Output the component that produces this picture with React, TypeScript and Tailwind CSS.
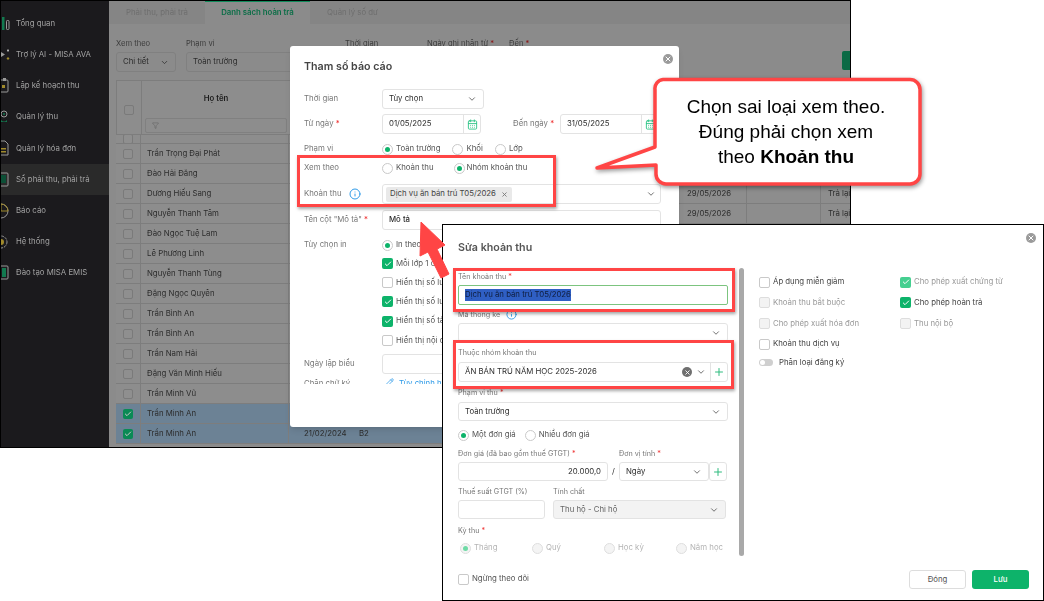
import React from "react";
import { Check, ChevronDown, Plus, CalendarDays, X, Filter, Info, Pencil } from "lucide-react";

const G = "#12794f";
const Y = "#a08a2c";
const W = "#9a9a9a";

const icons: React.ReactNode[] = [
  <><rect x="1" y="1" width="2.5" height="13" fill={G} /><rect x="5.5" y="4.5" width="2.5" height="9" rx="0.8" stroke={W} /></>,
  <><path d="M0 5l4 2.500-4 2.500z" fill={W} /><path d="M7 2l1 1.500-1 1.500-1-1.500z" fill="#c9c9c9" /><path d="M7 10l1.500 1.500L7 13l-1.500-1.500z" fill={Y} /></>,
  <><rect x="-2" y="2" width="9" height="12" rx="1" stroke={W} /><path d="M2 0h3v3H2z" fill={W} /><rect x="1" y="7" width="3" height="3" fill={Y} /></>,
  <><circle cx="3" cy="5" r="3" stroke={W} /><path d="M0 11c2 2 4 2 6 0v2H0z" fill={G} /><circle cx="3" cy="5" r="1" fill={G} /></>,
  <><path d="M-2 1h6l3 3v11H-2z" stroke={W} /><rect x="0" y="8" width="5" height="1.500" fill={Y} /><rect x="0" y="11" width="5" height="1.500" fill={Y} /></>,
  <><rect x="-2" y="1" width="9" height="13" rx="1" stroke={W} /><rect x="0" y="3" width="5" height="8" fill="#0c4f36" /></>,
  <><circle cx="0" cy="8" r="7" stroke={W} /><path d="M0 1a7 7 0 0 1 7 7H0z" stroke={Y} /></>,
  <><circle cx="0" cy="8" r="6" stroke={W} strokeDasharray="2.500 1" /><circle cx="0" cy="8" r="3" fill={Y} /></>,
  <><rect x="-2" y="1" width="9" height="13" rx="1" stroke={W} /><rect x="1" y="3" width="4" height="9" fill={G} /></>,
];

const menu = ["Tổng quan", "Trợ lý AI - MISA AVA", "Lập kế hoạch thu", "Quản lý thu", "Quản lý hóa đơn", "Sổ phải thu, phải trả", "Báo cáo", "Hệ thống", "Đào tạo MISA EMIS"];

const names = ["Trần Trọng Đại Phát","Đào Hải Đăng","Dương Hiếu Sang","Nguyễn Thanh Tâm","Đào Ngọc Tuệ Lam","Lê Phương Linh","Nguyễn Thanh Tùng","Đặng Ngọc Quyên","Trần Bình An","Trần Bình An","Trần Nam Hải","Đặng Văn Minh Hiếu","Trần Minh Vũ","Trần Minh An","Trần Minh An"];

function Req() {
  return <span className="text-[#ee2b2b]">&nbsp;*</span>;
}

function Radio({ on, dim }: { on?: boolean; dim?: boolean }) {
  return (
    <span className={`flex h-[11px] w-[11px] shrink-0 items-center justify-center rounded-full border ${dim ? "border-[#dedede] bg-[#f4f4f4]" : "border-[#c9c9c9] bg-white"}`}>
      {on && <span className={`h-[5px] w-[5px] rounded-full ${dim ? "bg-[#6fdaa6]" : "bg-[#0db36a]"}`} />}
    </span>
  );
}

function Box({ on, dim, soft }: { on?: boolean; dim?: boolean; soft?: boolean }) {
  if (on)
    return (
      <span className={`flex h-[11px] w-[11px] shrink-0 items-center justify-center rounded-[2px] ${soft ? "bg-[#45cf90]" : "bg-[#0db36a]"}`}>
        <Check size={8} strokeWidth={3} className="text-white" />
      </span>
    );
  return <span className={`h-[11px] w-[11px] shrink-0 rounded-[2px] border ${dim ? "border-[#dddddd] bg-[#f3f3f3]" : "border-[#c9c9c9] bg-white"}`} />;
}

function Close({ cls }: { cls: string }) {
  return (
    <span className={`absolute flex h-[10px] w-[10px] items-center justify-center rounded-full bg-[#9a9a9a] ${cls}`}>
      <X size={8} strokeWidth={3} className="text-white" />
    </span>
  );
}

function Sidebar() {
  return (
    <div className="flex h-full w-[108px] shrink-0 flex-col overflow-hidden bg-[#1b1a1d] pt-[7px]">
      {menu.map((label, i) => (
        <div key={label} className={`flex h-[31.2px] shrink-0 items-center gap-[6px] text-[7.8px] text-[#a2a2a2] ${i === 5 ? "bg-[#2a2a2a]" : ""}`}>
          <svg width="9" height="16" viewBox="0 0 9 16" fill="none" className="shrink-0">{icons[i]}</svg>
          <span className="whitespace-nowrap">{label}</span>
        </div>
      ))}
    </div>
  );
}

function Row({ name, selected, date, b2, right, partial }: { name: string; selected?: boolean; date?: string; b2?: string; right?: boolean; partial?: boolean }) {
  return (
    <div className={`flex shrink-0 items-center border-b border-[#7d7d7d] text-[7.8px] text-[#2c2c2c] ${partial ? "h-[9px] overflow-hidden" : "h-[20px]"} ${selected ? "bg-[#6c8295]" : "bg-[#8d8d8d]"}`}>
      <div className="flex h-full w-[25px] shrink-0 items-center justify-center border-r border-[#7d7d7d]">
        {selected ? (
          <span className="flex h-[10px] w-[10px] items-center justify-center rounded-[2px] bg-[#0a8a55]"><Check size={8} strokeWidth={3} className="text-[#c9c9c9]" /></span>
        ) : (
          <span className="h-[10px] w-[10px] rounded-[2px] border border-[#7a7a7a] bg-[#8f8f8f]" />
        )}
      </div>
      <div className="flex h-full w-[148px] shrink-0 items-center whitespace-nowrap border-r border-[#7d7d7d] pl-[6px]">{name}</div>
      <div className="w-[70px] shrink-0 pl-[15px]">{date}</div>
      <div className="w-[320px] shrink-0">{b2}</div>
      <div className="flex h-full w-[68px] shrink-0 items-center border-r border-[#7d7d7d] pl-[8px]">{right ? "29/05/2026" : ""}</div>
      <div className="h-full w-[74px] shrink-0 border-r border-[#7d7d7d]" />
      <div className="whitespace-nowrap pl-[7px]">{right ? "Trả lại" : ""}</div>
    </div>
  );
}

function Main() {
  return (
    <div className="flex h-full w-[741px] flex-col overflow-hidden bg-[#8b8b8b]">
      <div className="flex h-[23px] shrink-0 items-center bg-[#858585] text-[7.8px]">
        <div className="flex h-full w-[96px] items-center justify-center text-[#6e6e6e]">Phải thu, phải trả</div>
        <div className="flex h-full w-[105px] items-center justify-center border-t border-[#0f8a5a] bg-[#8b8b8b] font-semibold text-[#0b6e47]">Danh sách hoàn trả</div>
        <div className="flex h-full w-[85px] items-center justify-center text-[#6e6e6e]">Quản lý số dư</div>
      </div>
      <div className="flex h-[28px] shrink-0 gap-[9px] pl-[7px] pt-[14px] text-[7.6px] leading-[11px] text-[#3c3c3c]">
        <span className="w-[61px]">Xem theo</span>
        <span className="w-[150px]">Phạm vi</span>
        <span className="w-[73px]">Thời gian</span>
        <span className="w-[73px] whitespace-nowrap">Ngày ghi nhận từ <span className="text-[#8a1010]">*</span></span>
        <span className="whitespace-nowrap">Đến <span className="text-[#8a1010]">*</span></span>
      </div>
      <div className="flex h-[28px] shrink-0 gap-[10px] pl-[7px] text-[7.8px] text-[#2c2c2c]">
        <div className="flex h-[20px] w-[60px] items-center justify-between rounded-[3px] border border-[#808080] px-[6px]">Chi tiết<ChevronDown size={9} /></div>
        <div className="flex h-[20px] w-[150px] items-center rounded-[3px] border border-[#808080] px-[6px]">Toàn trường</div>
        <div className="ml-auto -mt-[1px] h-[19px] w-[8px] rounded-l-[2px] bg-[#0a6a45]" />
      </div>
      <div className="ml-[7px] flex min-h-0 flex-1 flex-col">
        <div className="flex h-[55px] shrink-0 border-y border-l border-[#7d7d7d] bg-[#8d8d8d] text-[7.8px]">
          <div className="flex w-[25px] shrink-0 items-center justify-center border-r border-[#7d7d7d] pt-[5px]"><span className="h-[10px] w-[10px] rounded-[2px] border border-[#7a7a7a]" /></div>
          <div className="flex w-[148px] flex-col items-center pt-[11px]">
            <span className="leading-[12px] font-semibold text-[#1c1c1c]">Họ tên</span>
            <div className="mt-[14px] flex h-[15px] w-[142px] items-center rounded-[2px] border border-[#808080] pl-[6px]"><Filter size={7} className="text-[#666666]" /></div>
          </div>
        </div>
        <Row name="" partial />
        {names.map((n, i) => (
          <Row key={i} name={n} selected={i > 12} right={i === 2 || i === 3} date={i === 14 ? "21/02/2024" : ""} b2={i === 14 ? "B2" : ""} />
        ))}
      </div>
    </div>
  );
}

function ReportRow({ label, h, children, cls = "" }: { label: React.ReactNode; h: string; children?: React.ReactNode; cls?: string }) {
  return (
    <div className={`flex shrink-0 items-center ${h} ${cls}`}>
      <div className="w-[78px] shrink-0 whitespace-nowrap text-[#777777]">{label}</div>
      {children}
    </div>
  );
}

const inputCls = "flex items-center rounded-[3px] border border-[#e3e3e3] bg-white";

function ReportModal() {
  const checks: [boolean, string][] = [[true, "Mỗi lớp 1 danh sách"], [false, "Hiển thị số lượng"], [true, "Hiển thị số lượng"], [true, "Hiển thị số tài khoản"], [false, "Hiển thị nội dung"]];
  return (
    <div className="absolute left-[290px] top-[46px] flex h-[381px] w-[389px] flex-col rounded-[3px] bg-white pl-[14px] text-[7.8px] text-[#2c2c2c] shadow-md blur-[0.35px]">
      <Close cls="right-[6px] top-[8px]" />
      <div className="flex h-[43px] shrink-0 items-center text-[10.7px] font-semibold text-[#444444]">Tham số báo cáo</div>
      <ReportRow label="Thời gian" h="h-[20px]">
        <div className={`${inputCls} h-[20px] w-[102px] justify-between px-[6px]`}>Tùy chọn<ChevronDown size={10} className="text-[#555555]" /></div>
      </ReportRow>
      <ReportRow label={<>Từ ngày<Req /></>} h="h-[20px]" cls="mt-[5px]">
        <div className={`${inputCls} h-[20px] w-[99px] justify-between pl-[6px]`}>01/05/2025<span className="flex h-full w-[17px] items-center justify-center border-l border-[#e3e3e3]"><CalendarDays size={11} className="text-[#2fc487]" /></span></div>
        <div className="ml-[32px] w-[47px] whitespace-nowrap text-[#777777]">Đến ngày<Req /></div>
        <div className={`${inputCls} h-[20px] w-[99px] justify-between pl-[6px]`}>31/05/2025<span className="flex h-full w-[17px] items-center justify-center border-l border-[#e3e3e3]"><CalendarDays size={11} className="text-[#2fc487]" /></span></div>
      </ReportRow>
      <ReportRow label="Phạm vi" h="h-[20px]" cls="mt-[5px]">
        <Radio on /><span className="ml-[3px] text-[#555555]">Toàn trường</span>
        <span className="ml-[12px]"><Radio /></span><span className="ml-[3px] text-[#555555]">Khối</span>
        <span className="ml-[12px]"><Radio /></span><span className="ml-[3px] text-[#555555]">Lớp</span>
      </ReportRow>
      <ReportRow label="Xem theo" h="h-[18px]">
        <Radio /><span className="ml-[3px] text-[#555555]">Khoản thu</span>
        <span className="ml-[20px]"><Radio on /></span><span className="ml-[2px] text-[#555555]">Nhóm khoản thu</span>
      </ReportRow>
      <ReportRow label={<span className="flex items-center">Khoản thu<Info size={12} className="ml-[7px] text-[#2f9be8]" /></span>} h="h-[20px]" cls="mt-[7px]">
        <div className={`${inputCls} h-[20px] w-[279px] justify-between pl-[3px] pr-[4px]`}>
          <span className="flex h-[15px] items-center gap-[5px] rounded-[2px] bg-[#e9e9e9] px-[4px] text-[#444444]">Dịch vụ ăn bán trú T05/2026<X size={7} strokeWidth={3} className="text-[#777777]" /></span>
          <ChevronDown size={10} className="text-[#555555]" />
        </div>
      </ReportRow>
      <ReportRow label={<>Tên cột "Mô tả"<Req /></>} h="h-[20px]" cls="mt-[6px]">
        <div className={`${inputCls} h-[20px] w-[279px] pl-[6px] font-medium`}>Mô tả</div>
      </ReportRow>
      <ReportRow label="Tùy chọn in" h="h-[20px]" cls="mt-[5px]">
        <Radio on /><span className="ml-[3px] whitespace-nowrap text-[#555555]">In theo ngày sinh</span>
      </ReportRow>
      {checks.map(([on, t], i) => (
        <div key={i} className={`ml-[78px] flex h-[19.2px] shrink-0 items-center gap-[3px] whitespace-nowrap text-[#555555] ${i === 0 ? "-mt-[1px]" : ""}`}><Box on={on} />{t}</div>
      ))}
      <ReportRow label="Ngày lập biểu" h="h-[20px]" cls="mt-[4px]">
        <div className={`${inputCls} h-[20px] w-[279px]`} />
      </ReportRow>
      <div className="flex h-[10px] shrink-0 overflow-hidden pt-[4px] leading-[10px]">
        <span className="w-[78px] text-[#777777]">Chân chữ ký</span>
        <Pencil size={9} className="ml-[3px] text-[#2f9be8]" /><span className="ml-[5px] text-[#2f9be8]">Tùy chỉnh hiển thị</span>
      </div>
    </div>
  );
}

function Lab({ children, cls = "" }: { children: React.ReactNode; cls?: string }) {
  return <div className={`flex h-[11px] shrink-0 items-center whitespace-nowrap text-[7.2px] leading-none text-[#777777] ${cls}`}>{children}</div>;
}

function Sel({ children, cls = "" }: { children?: React.ReactNode; cls?: string }) {
  return <div className={`${inputCls} h-[19px] shrink-0 justify-between px-[6px] text-[7.8px] text-[#2c2c2c] ${cls}`}>{children}<ChevronDown size={10} className="ml-auto text-[#555555]" /></div>;
}

function EditModal() {
  const left: [string, boolean][] = [["Áp dụng miễn giảm", false], ["Khoản thu bắt buộc", true], ["Cho phép xuất hóa đơn", true], ["Khoản thu dịch vụ", false]];
  return (
    <div className="absolute left-[442px] top-[224px] h-[377px] w-[602px] border border-black bg-white">
      <div className="flex h-full w-full text-[7.8px] text-[#2c2c2c] blur-[0.35px]">
        <Close cls="right-[7px] top-[8px]" />
        <div className="flex w-[285px] shrink-0 flex-col pl-[15px]">
          <div className="flex h-[46px] shrink-0 items-center text-[10.7px] font-semibold text-[#555555]">Sửa khoản thu</div>
          <Lab>Tên khoản thu<Req /></Lab>
          <div className="mt-[3px] flex h-[20px] w-[270px] shrink-0 items-center rounded-[2px] border border-[#7cc47f] pl-[6px]">
            <span className="bg-[#2f5fc4] text-[#0f1d3d]">Dịch vụ ăn bán trú T05/2026</span>
          </div>
          <Lab cls="mt-[4px]">Mã thống kê<Info size={11} className="ml-[6px] text-[#2f9be8]" /></Lab>
          <Sel cls="mt-[3px] w-[270px]" />
          <Lab cls="mt-[5px]">Thuộc nhóm khoản thu</Lab>
          <div className={`${inputCls} mt-[4px] h-[20px] w-[270px] shrink-0 justify-between pl-[6px]`}>
            <span>ĂN BÁN TRÚ NĂM HỌC 2025-2026</span>
            <span className="flex h-full items-center">
              <span className="mr-[4px] flex h-[10px] w-[10px] items-center justify-center rounded-full bg-[#6f6f6f]"><X size={7} strokeWidth={3} className="text-white" /></span>
              <ChevronDown size={10} className="mr-[4px] text-[#555555]" />
              <span className="flex h-full w-[17px] items-center justify-center border-l border-[#e3e3e3]"><Plus size={12} strokeWidth={2} className="text-[#2fbb7f]" /></span>
            </span>
          </div>
          <Lab cls="mt-[5px]">Phạm vi thu<Req /></Lab>
          <Sel cls="mt-[4px] w-[270px]">Toàn trường</Sel>
          <div className="mt-[7px] flex h-[14px] shrink-0 items-center text-[#555555]">
            <Radio on /><span className="ml-[3px]">Một đơn giá</span>
            <span className="ml-[9px]"><Radio /></span><span className="ml-[3px]">Nhiều đơn giá</span>
          </div>
          <div className="mt-[6px] flex shrink-0">
            <Lab cls="w-[161px]">Đơn giá (đã bao gồm thuế GTGT)<Req /></Lab>
            <Lab>Đơn vị tính<Req /></Lab>
          </div>
          <div className="mt-[3px] flex h-[19px] shrink-0 items-center">
            <div className={`${inputCls} h-[19px] w-[150px] justify-end pr-[6px]`}>20.000,0</div>
            <span className="w-[11px] text-center">/</span>
            <Sel cls="w-[90px]">Ngày</Sel>
            <span className={`${inputCls} h-[19px] w-[18px] justify-center`}><Plus size={12} strokeWidth={2} className="text-[#2fbb7f]" /></span>
          </div>
          <div className="mt-[5px] flex shrink-0">
            <Lab cls="w-[95px]">Thuế suất GTGT (%)</Lab>
            <Lab>Tính chất</Lab>
          </div>
          <div className="mt-[3px] flex h-[19px] shrink-0 items-center gap-[8px]">
            <div className={`${inputCls} h-[19px] w-[87px]`} />
            <Sel cls="w-[173px] !bg-[#f3f3f3] !text-[#666666]">Thu hộ - Chi hộ</Sel>
          </div>
          <Lab cls="mt-[6px]">Kỳ thu<Req /></Lab>
          <div className="ml-[2px] mt-[6px] flex h-[12px] shrink-0 items-center text-[#b4b4b4]">
            {["Tháng", "Quý", "Học kỳ", "Năm học"].map((t, i) => (
              <span key={t} className="flex w-[72px] shrink-0 items-center gap-[3px]"><Radio on={i === 0} dim />{t}</span>
            ))}
          </div>
          <div className="mt-[19px] flex h-[12px] shrink-0 items-center gap-[3px] text-[#555555]"><Box />Ngừng theo dõi</div>
        </div>
        <div className="mt-[43px] ml-[11px] h-[288px] w-[5px] shrink-0 rounded-full bg-[#a9a9a9]" />
        <div className="flex w-[156px] shrink-0 flex-col pl-[15px] pt-[47px]">
          {left.map(([t, dim]) => (
            <div key={t} className={`flex h-[20.6px] items-center gap-[3px] whitespace-nowrap ${dim ? "text-[#999999]" : "text-[#444444]"}`}>
              <Box dim={dim} />{t}
            </div>
          ))}
          <div className="flex h-[17px] items-center gap-[6px] whitespace-nowrap text-[#444444]">
            <span className="flex h-[7px] w-[14px] items-center rounded-full bg-[#cfcfcf] pl-[1px]"><span className="h-[5px] w-[5px] rounded-full bg-white" /></span>
            Phân loại đăng ký
          </div>
        </div>
        <div className="flex flex-col pt-[47px]">
          <div className="flex h-[20.6px] items-center gap-[3px] whitespace-nowrap text-[#999999]"><Box on soft />Cho phép xuất chứng từ</div>
          <div className="flex h-[20.6px] items-center gap-[3px] whitespace-nowrap text-[#444444]"><Box on />Cho phép hoàn trả</div>
          <div className="flex h-[20.6px] items-center gap-[3px] whitespace-nowrap text-[#999999]"><Box dim />Thu nội bộ</div>
        </div>
        <div className="absolute bottom-[11px] right-[14px] flex gap-[6px]">
          <button className="h-[19px] w-[57px] rounded-[3px] border border-[#dddddd] bg-white text-[7.8px] text-[#555555]">Đóng</button>
          <button className="h-[19px] w-[57px] rounded-[3px] bg-[#0db36a] text-[7.8px] font-medium text-white">Lưu</button>
        </div>
      </div>
    </div>
  );
}

function RedBox({ cls }: { cls: string }) {
  return <div className={`pointer-events-none absolute border-[3px] border-[#ff4545] shadow-[1px_2px_3px_rgba(0,0,0,0.35)] ${cls}`} />;
}

export default function App() {
  return (
    <div className="relative h-[601px] w-[1044px] overflow-hidden bg-white" style={{ fontFamily: "Inter, 'Noto Sans', sans-serif" }}>
      <div className="absolute left-0 top-0 h-[448px] w-[851px] border border-black">
        <div className="flex h-full w-full overflow-hidden blur-[0.35px]">
          <Sidebar />
          <Main />
        </div>
      </div>
      <ReportModal />
      <EditModal />
      <RedBox cls="left-[297px] top-[155px] h-[52px] w-[259px]" />
      <RedBox cls="left-[453px] top-[268px] h-[44px] w-[282px]" />
      <RedBox cls="left-[453px] top-[340px] h-[49px] w-[281px]" />
      <svg className="absolute left-0 top-0" width="1044" height="601" fill="none">
        <path d="M663 79.5H910a10 10 0 0 1 10 10V174a10 10 0 0 1-10 10H666a10 10 0 0 1-10-10V165L597 168 655 147V89.5a9 9 0 0 1 8-10Z" fill="#fff" stroke="#ff4545" strokeWidth="3.5" strokeLinejoin="round" style={{ filter: "drop-shadow(1px 2px 2px rgba(0,0,0,0.4))" }} />
        <path d="M449 274 437 249 445 245 421 222 420 256 428 252 441 278Z" fill="#ff4545" stroke="#ff4545" strokeLinejoin="round" />
      </svg>
      <div className="absolute left-[654px] top-[94px] w-[264px] text-center text-[19px] leading-[25px] text-black" style={{ fontFamily: "'Liberation Sans', sans-serif" }}>
        <div>Chọn sai loại xem theo.</div>
        <div>Đúng phải chọn xem</div>
        <div>theo <b>Khoản thu</b></div>
      </div>
    </div>
  );
}
